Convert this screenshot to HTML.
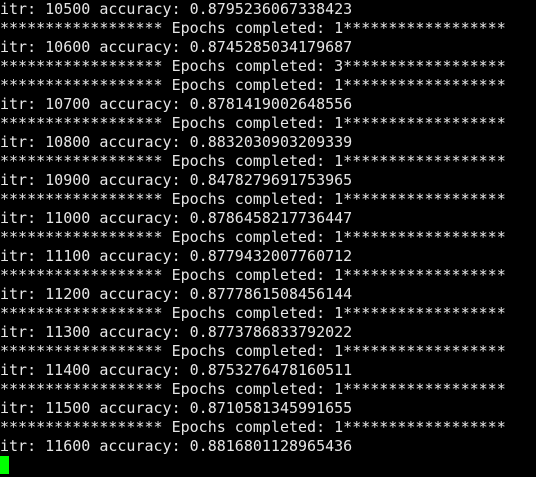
<!DOCTYPE html>
<html><head><style>
html,body{margin:0;padding:0;background:#000;width:536px;height:477px;overflow:hidden}
pre{margin:0;padding:0;font-family:"DejaVu Sans Mono","Liberation Mono",monospace;font-size:15px;line-height:19px;color:#e6e6e6;letter-spacing:0}
.c{display:inline-block;width:9px;height:18px;background:#00ff00;vertical-align:top}
</style></head><body><pre>itr: 10500 accuracy: 0.8795236067338423
****************** Epochs completed: 1******************
itr: 10600 accuracy: 0.8745285034179687
****************** Epochs completed: 3******************
****************** Epochs completed: 1******************
itr: 10700 accuracy: 0.8781419002648556
****************** Epochs completed: 1******************
itr: 10800 accuracy: 0.8832030903209339
****************** Epochs completed: 1******************
itr: 10900 accuracy: 0.8478279691753965
****************** Epochs completed: 1******************
itr: 11000 accuracy: 0.8786458217736447
****************** Epochs completed: 1******************
itr: 11100 accuracy: 0.8779432007760712
****************** Epochs completed: 1******************
itr: 11200 accuracy: 0.8777861508456144
****************** Epochs completed: 1******************
itr: 11300 accuracy: 0.8773786833792022
****************** Epochs completed: 1******************
itr: 11400 accuracy: 0.8753276478160511
****************** Epochs completed: 1******************
itr: 11500 accuracy: 0.8710581345991655
****************** Epochs completed: 1******************
itr: 11600 accuracy: 0.8816801128965436
<span class="c"></span></pre></body></html>
